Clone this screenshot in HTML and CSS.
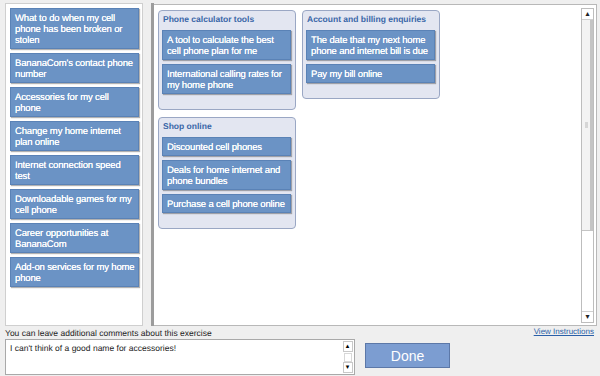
FILE: index.html
```html
<!DOCTYPE html>
<html lang="en">
<head>
    <meta charset="UTF-8">
    <meta name="viewport" content="width=device-width, initial-scale=1.0">
    <title>Card sort</title>
    <link rel="stylesheet" href="styles.css">
</head>
<body>
    <div class="workspace">
        <!-- Unsorted cards -->
        <div class="source">
            <div class="card">What to do when my cell phone has been broken or stolen</div>
            <div class="card">BananaCom's contact phone number</div>
            <div class="card">Accessories for my cell phone</div>
            <div class="card">Change my home internet plan online</div>
            <div class="card">Internet connection speed test</div>
            <div class="card">Downloadable games for my cell phone</div>
            <div class="card">Career opportunities at BananaCom</div>
            <div class="card">Add-on services for my home phone</div>
        </div>
        <div class="divider"></div>
        <!-- Sorted groups -->
        <div class="board">
            <div class="groups">
                <div class="group">
                    <div class="group-title">Phone calculator tools</div>
                    <div class="card">A tool to calculate the best cell phone plan for me</div>
                    <div class="card">International calling rates for my home phone</div>
                </div>
                <div class="group">
                    <div class="group-title">Account and billing enquiries</div>
                    <div class="card">The date that my next home phone and internet bill is due</div>
                    <div class="card">Pay my bill online</div>
                </div>
                <div class="group">
                    <div class="group-title">Shop online</div>
                    <div class="card">Discounted cell phones</div>
                    <div class="card">Deals for home internet and phone bundles</div>
                    <div class="card">Purchase a cell phone online</div>
                </div>
            </div>
            <div class="scrollbar">
                <div class="arrow">&#9652;</div>
                <div class="track">
                    <div class="thumb"><span class="grip"></span></div>
                </div>
                <div class="arrow">&#9662;</div>
            </div>
        </div>
    </div>
    <div class="footer">
        <div class="comments">
            <div class="comments-head">
                <span>You can leave additional comments about this exercise</span>
            </div>
            <div class="comment-box">
                <div class="comment-text">I can't think of a good name for accessories!</div>
                <div class="mini-scroll">
                    <div class="mini-arrow">&#9652;</div>
                    <div class="mini-thumb"></div>
                    <div class="mini-arrow">&#9662;</div>
                </div>
            </div>
        </div>
        <button type="button" class="done-btn">Done</button>
        <a href="#" class="instructions">View Instructions</a>
    </div>
</body>
</html>
```

FILE: styles.css
```css
body {
    margin: 0;
    background: #efefef;
    font-family: 'Liberation Sans', Arial, Helvetica, sans-serif;
    text-rendering: geometricPrecision;
    width: 600px;
    height: 376px;
    overflow: hidden;
    position: relative;
}

.workspace {
    display: flex;
    height: 323px;
    padding: 3px 3px 0 5px;
}

.source {
    width: 129px;
    background: #fff;
    border: 1px solid #cfcfcf;
    padding: 4px 3px 4px 4px;
    display: flex;
    flex-direction: column;
    gap: 4px;
}

.divider {
    width: 3px;
    margin-left: 8px;
    background: #9c9c9c;
}

.board {
    flex: 1;
    display: flex;
    background: #fff;
    border: 1px solid #b8b8b8;
    border-left: none;
    margin-top: 1px;
}

.groups {
    flex: 1;
    display: grid;
    grid-template-columns: repeat(2, 138px);
    align-items: start;
    align-content: start;
    gap: 7px 6px;
    padding: 5px 4px;
}

.card {
    background: #6b93c5;
    border: 1px solid #5a82b6;
    box-shadow: 1px 1px 1px rgba(0, 0, 0, 0.3);
    color: #fff;
    font-size: 9.5px;
    letter-spacing: -0.15px;
    line-height: 11px;
    padding: 4px 3px 2px 4px;
    text-shadow: 0 0 0.5px #fff;
}

.group {
    background: #e3e6f1;
    border: 1px solid #9aa7c4;
    border-radius: 4px;
    padding: 2px 4px 15px 3px;
    display: flex;
    flex-direction: column;
    gap: 4px;
}

.group-title {
    color: #3a67a8;
    font-size: 8.5px;
    font-weight: bold;
    white-space: nowrap;
    height: 13px;
    line-height: 13px;
    padding-left: 1px;
}

.scrollbar {
    width: 11px;
    margin: 3px 2px 2px 0;
    border: 1px solid #bdbdbd;
    background: #f5f5f5;
    display: flex;
    flex-direction: column;
}

.arrow {
    height: 10px;
    font-size: 8px;
    line-height: 10px;
    text-align: center;
    color: #222;
    background: #fff;
    border-bottom: 1px solid #d0d0d0;
}

.arrow:last-child {
    border-bottom: none;
    border-top: 1px solid #d0d0d0;
}

.track {
    flex: 1;
    background: #fff;
}

.thumb {
    height: 210px;
    background: #f3f3f3;
    border-right: 3px solid #c4c4c4;
    border-bottom: 1px solid #c4c4c4;
    display: flex;
    align-items: center;
    justify-content: center;
}

.grip {
    width: 3px;
    height: 6px;
    background: #d6d6d6;
}

.footer {
    display: flex;
    align-items: flex-start;
    padding: 2px 0 0 5px;
}

.comments-head {
    font-size: 8.5px;
    color: #222;
    line-height: 11px;
    height: 11px;
}

.comment-box {
    width: 348px;
    height: 34px;
    border: 1px solid #a9a9a9;
    background: #fff;
    display: flex;
}

.comment-text {
    flex: 1;
    font-size: 8.5px;
    color: #222;
    padding: 3px 4px;
}

.mini-scroll {
    width: 9px;
    margin: 1px 2px 1px 0;
    display: flex;
    flex-direction: column;
    justify-content: space-between;
    align-items: center;
}

.mini-arrow {
    width: 8px;
    height: 9px;
    font-size: 7px;
    line-height: 9px;
    text-align: center;
    border: 1px solid #c8c8c8;
    background: #fff;
}

.mini-thumb {
    width: 6px;
    height: 7px;
    border: 1px solid #d8d8d8;
}

.done-btn {
    margin: 15px 0 0 10px;
    width: 85px;
    height: 25px;
    background: #7c9dd1;
    border: 1px solid #5c78a8;
    color: #fff;
    font-family: 'Liberation Sans', Arial, sans-serif;
    font-size: 14px;
    padding: 0;
}

.instructions {
    position: absolute;
    right: 6px;
    top: 327px;
    font-size: 8px;
    color: #2a5fa8;
}
```
